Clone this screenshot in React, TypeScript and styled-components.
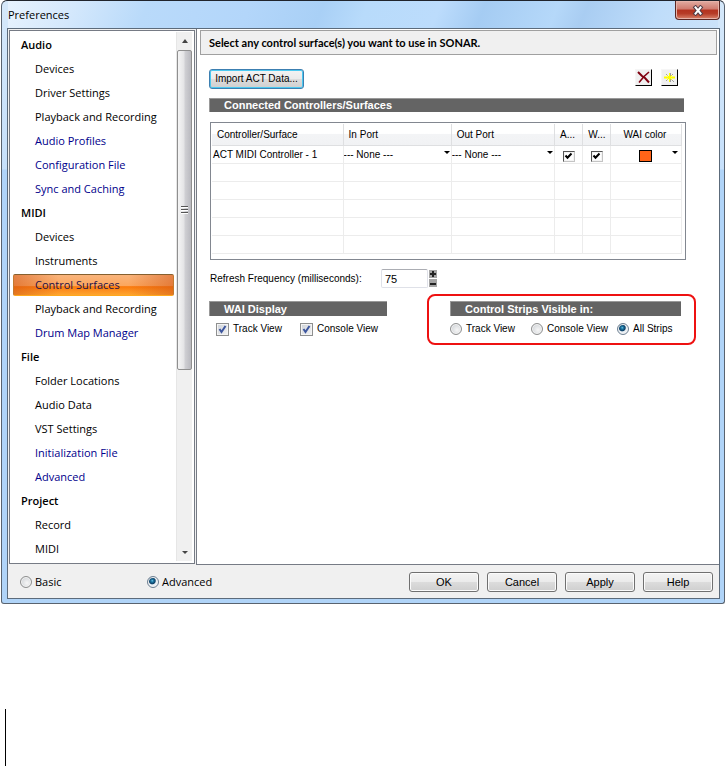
import React, { useState } from 'react';
import styled, { createGlobalStyle, css } from 'styled-components';

const GlobalStyle = createGlobalStyle`
  * { box-sizing: border-box; }
  body { margin: 0; background: #fff; color: #000; }
  body, button, input, select { font: 10px/14px "Liberation Sans", Arial, sans-serif; }
  button, input { margin: 0; }
`;

const humanist = css`
  font-family: "Open Sans", "Noto Sans", sans-serif;
  font-size: 11px;
`;

const Window = styled.div`
  display: flex;
  flex-direction: column;
  margin: 0 1px;
  padding: 0 4px 4px 5px;
  border: 1px solid #59636f;
  border-top: 1px solid #20242c;
  border-radius: 6px 6px 3px 3px;
  background:
    linear-gradient(#d5e8fa 0, #c6e0fb 168px, transparent 169px) left top / 6px 100% no-repeat,
    linear-gradient(#d5e8fa 0, #c6e0fb 168px, transparent 169px) right top / 6px 100% no-repeat,
    linear-gradient(112deg, #e8f3fe 0%, #d4e8fc 10%, #b9dafa 20%, #b3d6fa 34%, #a9d0f6 44%, #b8dbfb 50%, #bcdcfc 60%, #a5ccf3 66%, #b5d8f9 76%, #a9cdf2 80%, #bfddfa 90%, #cde3f9 100%) left top / 100% 30px no-repeat,
    #b0d4f8;
`;

const TitleBar = styled.header`
  display: flex;
  align-items: flex-start;
  justify-content: space-between;
  height: 27px;
  padding-left: 1px;
`;

const WindowTitle = styled.h1`
  ${humanist}
  margin: 6px 0 0;
  line-height: 16px;
  font-weight: 400;
`;

const CloseButton = styled.button`
  display: grid;
  place-items: center;
  width: 45px;
  height: 19px;
  padding: 0;
  border: 1px solid #5b2723;
  border-top: 0;
  border-radius: 0 0 4px 4px;
  background: linear-gradient(#e2aca2 0, #cf7a6e 45%, #b3321f 50%, #b63c27 70%, #d9826b 100%);
  box-shadow: inset 0 0 0 1px #e6b3a9;
`;

const Client = styled.div`
  display: flex;
  flex-direction: column;
  border: 1px solid #5c6b7b;
  background: #f0f0f0;
`;

const Panels = styled.div`
  display: flex;
  height: 536px;
`;

const Sidebar = styled.nav`
  display: flex;
  flex: none;
  width: 186px;
  margin: 1px 1px 1px 1px;
  border: 1px solid #767b85;
  background: #fff;
`;

const NavList = styled.div`
  display: flex;
  flex-direction: column;
  flex: 1;
  padding: 2px 2px 0 3px;
`;

const NavHeading = styled.h2`
  ${humanist}
  margin: 0;
  padding-left: 8px;
  line-height: 24px;
  font-weight: 600;
`;

const NavItem = styled.a<{ $changed?: boolean; $selected?: boolean }>`
  ${humanist}
  display: block;
  height: 22px;
  margin: 1px 0;
  padding-left: 21px;
  border: 1px solid transparent;
  line-height: 20px;
  border-radius: 2px;
  text-decoration: none;
  color: ${p => (p.$changed ? '#00008b' : '#000')};
  ${p => p.$selected && css`
    color: #1d1049;
    border-color: #86602f #c47a30 #ffa81c;
    background:
      linear-gradient(90deg, rgba(205,80,20,.5), transparent 28%, transparent 72%, rgba(205,80,20,.5)),
      linear-gradient(#f9b47c 0, #fca65c 55%, #fb7a0c 58%, #fd9222 80%, #ffa62e 100%);
  `}
`;

const ScrollTrack = styled.div`
  display: flex;
  flex-direction: column;
  width: 16px;
  margin: 1px 2px 2px 0;
  background: #f0f0f0;
  border-left: 1px solid #e6e6e6;
`;

const ScrollArrow = styled.button`
  display: grid;
  place-items: center;
  height: 18px;
  padding: 0;
  border: 0;
  background: transparent;
`;

const ScrollThumb = styled.div`
  display: grid;
  place-items: center;
  flex: 0 0 320px;
  margin-bottom: auto;
  border: 1px solid #8f8f8f;
  border-radius: 2px;
  background: linear-gradient(90deg, #f5f5f5, #e4e4e6 45%, #cfcfd3 55%, #b9b9bf);
`;

const Content = styled.main`
  flex: 1;
  min-width: 0;
  padding: 1px 2px 0 3px;
  border: 1px solid #767b85;
  border-top: 0;
  border-right: 0;
  background: #fff;
`;

const Banner = styled.h2`
  margin: 0;
  height: 25px;
  padding-left: 8px;
  border: 1px solid #a0a0a0;
  background: #f0f0f0;
  font-family: Lato, "Open Sans", sans-serif;
  font-size: 11px;
  line-height: 24px;
  font-weight: 700;
`;

const PageBody = styled.div`
  padding: 14px 21px 0 9px;
`;

const Toolbar = styled.div`
  display: flex;
  align-items: flex-start;
  gap: 9px;
  margin-right: 18px;
`;

const PushButton = styled.button<{ $focused?: boolean }>`
  width: ${p => (p.$focused ? 95 : 70)}px;
  height: 20px;
  margin-right: ${p => (p.$focused ? 'auto' : '0')};
  padding: 0;
  border: 1px solid ${p => (p.$focused ? '#3c7fb1' : '#707070')};
  border-radius: 3px;
  background: linear-gradient(#f3f3f3 0, #ebebeb 48%, #dcdcdc 52%, #cfcfcf 100%);
  box-shadow: inset 0 0 0 1px ${p => (p.$focused ? '#4cc9f0' : '#fbfbfb')};
  white-space: nowrap;
`;

const IconButton = styled.button`
  display: grid;
  place-items: center;
  width: 17px;
  height: 17px;
  padding: 0;
  border: 1px solid #f6f6f6;
  border-right-color: #000;
  border-bottom-color: #000;
  background: #f0f0f0;
`;

const SectionBar = styled.h3`
  margin: 0;
  padding-left: 14px;
  border-top: 1px solid #999;
  border-left: 1px solid #999;
  background: #646464;
  color: #fff;
  font-size: 11px;
  line-height: 14px;
  font-weight: 700;
  white-space: nowrap;
`;

const SurfacesSection = styled.section`
  margin-top: 9px;
  padding-right: 10px;
  ${SectionBar} { margin-right: 2px; line-height: 13px; }
`;

const TableFrame = styled.div`
  margin: 10px 0 0 1px;
  height: 138px;
  padding: 1px 3px 0 1px;
  border: 1px solid #828790;
`;

const SurfaceTable = styled.table`
  width: 100%;
  border-collapse: separate;
  border-spacing: 0;
  table-layout: fixed;
  th, td {
    padding: 0;
    border-right: 1px solid #ececec;
    border-bottom: 1px solid #ececec;
    font-weight: 400;
    text-align: left;
    white-space: nowrap;
  }
  th {
    height: 22px;
    padding-left: 5px;
    border-color: #dedfe1;
    background: linear-gradient(#fff 0, #fff 45%, #f3f4f6 50%, #f1f2f4 100%);
  }
  td { height: 18px; line-height: 17px; }
  td:first-child { padding-left: 1px; }
  th:last-child { padding-left: 12px; }
`;

const Centered = styled.div`
  display: grid;
  place-items: end center;
  height: 17px;
`;

const ComboFrame = styled.div`
  display: grid;
  grid-template-columns: 1fr 7px;
  align-items: center;
  height: 17px;
  svg { grid-area: 1 / 2; pointer-events: none; margin-bottom: 4px; }
`;

const Combo = styled.select`
  grid-area: 1 / 1 / 2 / 3;
  appearance: none;
  width: 100%;
  height: 17px;
  padding: 0;
  border: 0;
  background: transparent;
  color: #000;
  line-height: 17px;
`;

const ColorCell = styled.div`
  display: grid;
  grid-template-columns: 1fr 9px;
  align-items: center;
  height: 17px;
  svg { margin-bottom: 4px; }
`;

const Swatch = styled.button`
  justify-self: center;
  width: 13px;
  height: 12px;
  margin: 3px 0 0 7px;
  padding: 0;
  border: 1px solid #000;
  background: #ff6418;
`;

const FrequencyRow = styled.div`
  display: flex;
  align-items: center;
  margin: 9px 0 0 1px;
`;

const FrequencyLabel = styled.label`
  width: 171px;
`;

const FrequencyInput = styled.input`
  width: 47px;
  height: 19px;
  padding: 0 3px;
  border: 1px solid #dfe1e8;
  border-top-color: #abadb3;
  border-radius: 2px;
  font-size: 11px;
`;

const Spinner = styled.div`
  display: flex;
  flex-direction: column;
  gap: 1px;
  margin-left: 1px;
`;

const SpinButton = styled.button`
  display: grid;
  place-items: center;
  width: 8px;
  height: 8px;
  padding: 0;
  border: 0;
  background: #a5a5a5;
`;

const OptionGroups = styled.div`
  display: flex;
  align-items: flex-start;
  justify-content: space-between;
  margin-top: 6px;
`;

const DisplayGroup = styled.section`
  width: 178px;
  margin-top: 7px;
`;

const StripsGroup = styled.section`
  width: 269px;
  height: 51px;
  padding: 5px 13px 0 21px;
  border: 2px solid #ee1111;
  border-radius: 8px;
`;

const Options = styled.div<{ $columns: string; $inset: number }>`
  display: grid;
  grid-template-columns: ${p => p.$columns};
  margin-top: 6px;
  padding-left: ${p => p.$inset}px;
`;

const OptionLabel = styled.label<{ $sidebarFont?: boolean }>`
  display: flex;
  align-items: center;
  gap: ${p => (p.$sidebarFont ? 3 : 4)}px;
  white-space: nowrap;
  ${p => p.$sidebarFont && humanist}
`;

const Radio = styled.input`
  appearance: none;
  width: 12px;
  height: 12px;
  border: 1px solid #8e8f8f;
  border-radius: 50%;
  box-shadow: inset 0 0 0 1px #f4f4f4;
  background: radial-gradient(circle at 60% 60%, #f6f6f6, #c6cacf);
  &:checked {
    border-color: #6d7f92;
    background: radial-gradient(circle at 42% 38%, #8ad4f2 0, #2180ac 1px, #0c3f66 3px, #e9eff4 4px);
  }
`;

const CheckFrame = styled.span`
  display: grid;
  place-items: center;
  width: 13px;
  height: 13px;
  > * { grid-area: 1 / 1; }
  svg { pointer-events: none; visibility: hidden; }
  input:checked + svg { visibility: visible; }
`;

const CheckInput = styled.input<{ $classic?: boolean }>`
  appearance: none;
  width: ${p => (p.$classic ? 12 : 13)}px;
  height: ${p => (p.$classic ? 11 : 13)}px;
  border: 1px solid #8e8f8f;
  box-shadow: inset 0 0 0 1px #f4f4f4;
  background: linear-gradient(135deg, #ced2d8, #f4f4f4);
  ${p => p.$classic && css`
    border-color: #555 #c4c4c4 #c4c4c4 #555;
    background: #fff;
  `}
`;

const Footer = styled.footer`
  display: flex;
  align-items: center;
  height: 33px;
  padding: 0 6px 0 12px;
`;

const ModeChoice = styled.div`
  width: 127px;
`;

const FooterButtons = styled.div`
  display: flex;
  gap: 8px;
  margin-left: auto;
  ${PushButton} { font-size: 11px; }
`;

const RevisionBar = styled.div`
  height: 57px;
  margin: 105px 0 0 5px;
  border-left: 1px solid #000;
`;

const DropArrow = () => (
  <svg width="6" height="3" viewBox="0 0 6 3"><path d="M0 0h6L3 3z" fill="#000" /></svg>
);

function Check({ classic, label }: { classic?: boolean; label?: string }) {
  return (
    <CheckFrame>
      <CheckInput type="checkbox" defaultChecked $classic={classic} aria-label={label} />
      <svg width="9" height="9" viewBox="0 0 9 9">
        <path d={classic ? 'M1.5 3.5l2 2.2 4-4.2' : 'M1.5 4l2 3 4-6'} fill="none" stroke={classic ? '#000' : '#3d569e'} strokeWidth="2" />
      </svg>
    </CheckFrame>
  );
}

function PortSelect({ label }: { label: string }) {
  return (
    <ComboFrame>
      <Combo aria-label={label}><option>--- None ---</option></Combo>
      <DropArrow />
    </ComboFrame>
  );
}

type Entry = { name: string; changed?: boolean; selected?: boolean };
const sections: { title: string; items: Entry[] }[] = [
  { title: 'Audio', items: [
    { name: 'Devices' }, { name: 'Driver Settings' }, { name: 'Playback and Recording' },
    { name: 'Audio Profiles', changed: true }, { name: 'Configuration File', changed: true }, { name: 'Sync and Caching', changed: true },
  ] },
  { title: 'MIDI', items: [
    { name: 'Devices' }, { name: 'Instruments' }, { name: 'Control Surfaces', selected: true },
    { name: 'Playback and Recording' }, { name: 'Drum Map Manager', changed: true },
  ] },
  { title: 'File', items: [
    { name: 'Folder Locations' }, { name: 'Audio Data' }, { name: 'VST Settings' },
    { name: 'Initialization File', changed: true }, { name: 'Advanced', changed: true },
  ] },
  { title: 'Project', items: [{ name: 'Record' }, { name: 'MIDI' }] },
];

const emptyRows = [0, 1, 2, 3, 4];
const columns = [0, 1, 2, 3, 4, 5];

const Column = styled.col<{ $share?: number }>`
  width: ${p => (p.$share ? `${p.$share}%` : 'auto')};
`;

export default function App() {
  const [frequency, setFrequency] = useState(75);
  return (
    <>
      <GlobalStyle />
      <Window>
        <TitleBar>
          <WindowTitle>Preferences</WindowTitle>
          <CloseButton aria-label="Close">
            <svg width="12" height="11" viewBox="0 0 12 11">
              <path d="M3.500 2.500l5 6M8.500 2.500l-5 6" stroke="#4e3c46" strokeWidth="4" strokeLinecap="square" />
              <path d="M3.500 2.500l5 6M8.500 2.500l-5 6" stroke="#fff" strokeWidth="2" strokeLinecap="square" />
            </svg>
          </CloseButton>
        </TitleBar>
        <Client>
          <Panels>
            <Sidebar aria-label="Preference categories">
              <NavList>
                {sections.map(section => (
                  <React.Fragment key={section.title}>
                    <NavHeading>{section.title}</NavHeading>
                    {section.items.map(item => (
                      <NavItem key={item.name} href="#" $changed={item.changed} $selected={item.selected}>{item.name}</NavItem>
                    ))}
                  </React.Fragment>
                ))}
              </NavList>
              <ScrollTrack>
                <ScrollArrow aria-label="Scroll up">
                  <svg width="6" height="4" viewBox="0 0 6 4"><path d="M0 4h6L3 0z" fill="#444" /></svg>
                </ScrollArrow>
                <ScrollThumb>
                  <svg width="7" height="8" viewBox="0 0 7 8"><path d="M0 .5h7M0 3.5h7M0 6.5h7" stroke="#555" /><path d="M0 1.5h7M0 4.5h7M0 7.5h7" stroke="#fff" /></svg>
                </ScrollThumb>
                <ScrollArrow aria-label="Scroll down">
                  <svg width="6" height="3" viewBox="0 0 6 3"><path d="M0 0h6L3 3z" fill="#444" /></svg>
                </ScrollArrow>
              </ScrollTrack>
            </Sidebar>
            <Content>
              <Banner>Select any control surface(s) you want to use in SONAR.</Banner>
              <PageBody>
                <Toolbar>
                  <PushButton $focused>Import ACT Data...</PushButton>
                  <IconButton aria-label="Delete">
                    <svg width="15" height="15" viewBox="0 0 15 15"><path d="M2 2l4 4 3 2 4 4.500" fill="none" stroke="#800010" strokeWidth="2" /><path d="M13 2L8 6.500 3 12.500" fill="none" stroke="#800010" strokeWidth="1.600" /></svg>
                  </IconButton>
                  <IconButton aria-label="Add">
                    <svg width="15" height="15" viewBox="0 0 15 15"><path d="M4 4l8 8M11 4l-7 7M8.500 3v9" stroke="#a0a0a0" /><path d="M7.500 3v9M5 5l5 5M10 5L5 10" stroke="#ff0" /><path d="M2 7.500h11" stroke="#ff0" strokeWidth="2" /></svg>
                  </IconButton>
                </Toolbar>
                <SurfacesSection>
                  <SectionBar>Connected Controllers/Surfaces</SectionBar>
                  <TableFrame>
                    <SurfaceTable>
                      <colgroup>
                        <Column $share={28} /><Column $share={23} /><Column $share={22} />
                        <Column $share={6} /><Column $share={6} /><Column />
                      </colgroup>
                      <thead>
                        <tr><th>Controller/Surface</th><th>In Port</th><th>Out Port</th><th>A...</th><th>W...</th><th>WAI color</th></tr>
                      </thead>
                      <tbody>
                        <tr>
                          <td>ACT MIDI Controller - 1</td>
                          <td><PortSelect label="In Port" /></td>
                          <td><PortSelect label="Out Port" /></td>
                          <td><Centered><Check classic label="ACT" /></Centered></td>
                          <td><Centered><Check classic label="WAI" /></Centered></td>
                          <td><ColorCell><Swatch aria-label="WAI color" /><DropArrow /></ColorCell></td>
                        </tr>
                        {emptyRows.map(row => <tr key={row}>{columns.map(column => <td key={column} />)}</tr>)}
                      </tbody>
                    </SurfaceTable>
                  </TableFrame>
                </SurfacesSection>
                <FrequencyRow>
                  <FrequencyLabel htmlFor="frequency">Refresh Frequency (milliseconds):</FrequencyLabel>
                  <FrequencyInput id="frequency" value={frequency} onChange={e => setFrequency(Number(e.target.value) || 0)} />
                  <Spinner>
                    <SpinButton aria-label="Increase" onClick={() => setFrequency(frequency + 1)}>
                      <svg width="8" height="8" viewBox="0 0 8 8"><path d="M4 1v6M1 4h6" stroke="#222" strokeWidth="2" /></svg>
                    </SpinButton>
                    <SpinButton aria-label="Decrease" onClick={() => setFrequency(frequency - 1)}>
                      <svg width="8" height="8" viewBox="0 0 8 8"><path d="M1 5h6" stroke="#222" strokeWidth="2" /></svg>
                    </SpinButton>
                  </Spinner>
                </FrequencyRow>
                <OptionGroups>
                  <DisplayGroup>
                    <SectionBar>WAI Display</SectionBar>
                    <Options $columns="84px 1fr" $inset={7}>
                      <OptionLabel><Check />Track View</OptionLabel>
                      <OptionLabel><Check />Console View</OptionLabel>
                    </Options>
                  </DisplayGroup>
                  <StripsGroup>
                    <SectionBar>Control Strips Visible in:</SectionBar>
                    <Options $columns="81px 86px 1fr" $inset={0}>
                      <OptionLabel><Radio type="radio" name="strips" />Track View</OptionLabel>
                      <OptionLabel><Radio type="radio" name="strips" />Console View</OptionLabel>
                      <OptionLabel><Radio type="radio" name="strips" defaultChecked />All Strips</OptionLabel>
                    </Options>
                  </StripsGroup>
                </OptionGroups>
              </PageBody>
            </Content>
          </Panels>
          <Footer>
            <ModeChoice><OptionLabel $sidebarFont><Radio type="radio" name="mode" />Basic</OptionLabel></ModeChoice>
            <OptionLabel $sidebarFont><Radio type="radio" name="mode" defaultChecked />Advanced</OptionLabel>
            <FooterButtons>
              <PushButton>OK</PushButton><PushButton>Cancel</PushButton><PushButton>Apply</PushButton><PushButton>Help</PushButton>
            </FooterButtons>
          </Footer>
        </Client>
      </Window>
      <RevisionBar />
    </>
  );
}
